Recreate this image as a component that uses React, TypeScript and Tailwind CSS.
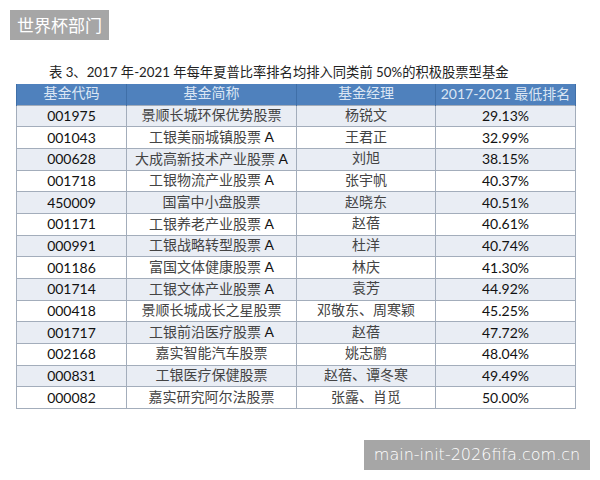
const rows: [string, string, string, string][] = [
  ["001975", "景顺长城环保优势股票", "杨锐文", "29.13%"],
  ["001043", "工银美丽城镇股票 A", "王君正", "32.99%"],
  ["000628", "大成高新技术产业股票 A", "刘旭", "38.15%"],
  ["001718", "工银物流产业股票 A", "张宇帆", "40.37%"],
  ["450009", "国富中小盘股票", "赵晓东", "40.51%"],
  ["001171", "工银养老产业股票 A", "赵蓓", "40.61%"],
  ["000991", "工银战略转型股票 A", "杜洋", "40.74%"],
  ["001186", "富国文体健康股票 A", "林庆", "41.30%"],
  ["001714", "工银文体产业股票 A", "袁芳", "44.92%"],
  ["000418", "景顺长城成长之星股票", "邓敬东、周寒颖", "45.25%"],
  ["001717", "工银前沿医疗股票 A", "赵蓓", "47.72%"],
  ["002168", "嘉实智能汽车股票", "姚志鹏", "48.04%"],
  ["000831", "工银医疗保健股票", "赵蓓、谭冬寒", "49.49%"],
  ["000082", "嘉实研究阿尔法股票", "张露、肖觅", "50.00%"],
];

const cjk = "font-['Liberation_Serif','Noto_Sans_CJK_SC',serif]";
const num = "font-['Lato','Open_Sans',sans-serif]";

// fund names ending in " A": the share-class letter is set in the latin font
const FundName = ({ name }: { name: string }) =>
  name.endsWith(" A") ? (
    <>
      {name.slice(0, -2)} <span className={`${num} text-[#111]`}>A</span>
    </>
  ) : (
    <>{name}</>
  );

export default function App() {
  return (
    <div className="w-[600px] h-[480px] bg-white relative overflow-hidden">
      <div className="absolute left-[10px] top-[10px] w-[99px] h-[30px] bg-[#a6a6a6] flex items-center justify-center text-white text-[17px] font-['Noto_Sans_CJK_SC',sans-serif]">
        世界杯部门
      </div>

      <div className="pt-[62px] px-[16px]">
        <div className={`pl-[33px] text-[13.3px] leading-[20px] text-[#222] whitespace-nowrap ${cjk}`}>
          表 <span className={num}>3</span>、<span className={num}>2017</span> 年<span className={num}>-2021</span> 年每年夏普比率排名均排入同类前 <span className={num}>50%</span>的积极股票型基金
        </div>
        <table className="mt-[1px] w-[559px] border-collapse table-fixed text-[14px] leading-[16px]">
          <colgroup>
            <col className="w-[110px]" />
            <col className="w-[170px]" />
            <col className="w-[139px]" />
            <col className="w-[140px]" />
          </colgroup>
          <thead>
            <tr className="h-[21px] bg-[#4f81bd] text-[#dbe6f4]">
              <th className={`font-normal border-x border-[#3f6fa8] ${cjk}`}>基金代码</th>
              <th className={`font-normal border-x border-[#3f6fa8] ${cjk}`}>基金简称</th>
              <th className={`font-normal border-x border-[#3f6fa8] ${cjk}`}>基金经理</th>
              <th className={`font-normal border-x border-[#3f6fa8] ${cjk}`}>
                <span className={num}>2017-2021</span> 最低排名
              </th>
            </tr>
          </thead>
          <tbody>
            {rows.map((r, i) => (
              <tr
                key={r[0]}
                className={`h-[21.7px] ${i % 2 === 0 ? "bg-[#e9edf4]" : "bg-white"}`}
              >
                <td className={`border border-[#a3adbb] text-center text-[#111] ${num}`}>{r[0]}</td>
                <td className={`border border-[#a3adbb] text-center text-[#444] ${cjk}`}>
                  <FundName name={r[1]} />
                </td>
                <td className={`border border-[#a3adbb] text-center text-[#444] ${cjk}`}>{r[2]}</td>
                <td className={`border border-[#a3adbb] text-center text-[#111] ${num}`}>{r[3]}</td>
              </tr>
            ))}
          </tbody>
        </table>
      </div>

      <div className="absolute left-[364px] top-[440px] w-[226px] h-[30px] bg-[#a6a6a6] flex items-center justify-center text-white text-[16px] font-extralight font-['DejaVu_Sans',sans-serif]">
        main-init-2026fifa.com.cn
      </div>
    </div>
  );
}
